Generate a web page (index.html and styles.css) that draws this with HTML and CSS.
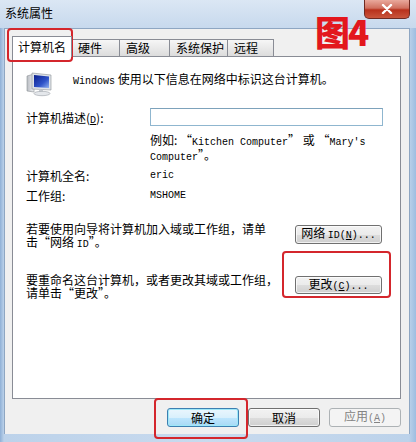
FILE: index.html
```html
<!DOCTYPE html>
<html lang="zh-CN">

<head>
    <meta charset="UTF-8">
    <title>系统属性</title>
    <link rel="stylesheet" href="styles.css">
</head>

<body>
    <div class="window">
        <div class="titlebar">
            <span class="title">系统属性</span>
            <button class="close-btn">
                <svg width="14" height="10" viewBox="0 0 14 10">
                    <path d="M3 1 L11 9 M11 1 L3 9" stroke="#fff" stroke-width="2.4" stroke-linecap="round" />
                </svg>
            </button>
        </div>

        <div class="client">
            <div class="tabs">
                <div class="tab active">计算机名</div>
                <div class="tab">硬件</div>
                <div class="tab">高级</div>
                <div class="tab">系统保护</div>
                <div class="tab">远程</div>
            </div>

            <div class="panel">
                <div class="intro">
                    <svg class="pc-icon" width="26" height="26" viewBox="0 0 26 26">
                        <defs>
                            <linearGradient id="tower" x1="0" y1="0" x2="1" y2="0">
                                <stop offset="0" stop-color="#b9bcc2" />
                                <stop offset="1" stop-color="#eef0f3" />
                            </linearGradient>
                            <linearGradient id="screen" x1="0" y1="0" x2="1" y2="1">
                                <stop offset="0" stop-color="#0b1f8c" />
                                <stop offset="0.6" stop-color="#2f53c9" />
                                <stop offset="1" stop-color="#8fb0f0" />
                            </linearGradient>
                        </defs>
                        <path d="M1 5 L8 3 L8 21 L1 20 Z" fill="url(#tower)" stroke="#8b9096" stroke-width="0.6" />
                        <path d="M6 2 L25 4 L25 19 L6 18 Z" fill="#dfe3e8" stroke="#8b9096" stroke-width="0.6" />
                        <path d="M8 4 L23 5.5 L23 17 L8 16 Z" fill="url(#screen)" />
                        <path d="M13 18.5 L17 18.7 L17 21 L13 21 Z" fill="#c8ccd2" />
                        <ellipse cx="16" cy="22.5" rx="8" ry="2.2" fill="#e4e7eb" stroke="#9ba0a6" stroke-width="0.6" />
                    </svg>
                    <p><span class="en">Windows</span> 使用以下信息在网络中标识这台计算机。</p>
                </div>

                <div class="form">
                    <label class="row-desc">计算机描述(<u class="en">D</u>):</label>
                    <input class="text-input row-desc" type="text">

                    <span></span>
                    <p class="hint">例如: “<span class="en">Kitchen Computer</span>” 或 “<span class="en">Mary's</span><br><span class="en">Computer</span>”。</p>

                    <label class="row-name">计算机全名:</label>
                    <span class="en row-name">eric</span>

                    <label class="row-group">工作组:</label>
                    <span class="en row-group">MSHOME</span>
                </div>

                <div class="action join">
                    <p>若要使用向导将计算机加入域或工作组，请单<br>击“网络 <span class="en">ID</span>”。</p>
                    <button class="btn">网络 <span class="en">ID(<u>N</u>)...</span></button>
                </div>

                <div class="action rename">
                    <p>要重命名这台计算机，或者更改其域或工作组，<br>请单击“更改”。</p>
                    <button class="btn">更改<span class="en">(<u>C</u>)...</span></button>
                </div>
            </div>

            <div class="footer">
                <button class="btn btn-default">确定</button>
                <button class="btn">取消</button>
                <button class="btn btn-disabled">应用<span class="en">(<u>A</u>)</span></button>
            </div>
        </div>

        <div class="mark">图4</div>
        <div class="highlight hl-tab"></div>
        <div class="highlight hl-change"></div>
        <div class="highlight hl-ok"></div>
    </div>
</body>

</html>
```

FILE: styles.css
```css
/* --- базовые --- */
:root {
    --client-bg: #f0f0f0;
    --border: #898c95;
    --text: #000000;
    --red: #d4262c;
    --cjk: "Noto Sans CJK SC", "Noto Sans", sans-serif;
}

body {
    margin: 0;
    font-family: var(--cjk);
    font-size: 12px;
    color: var(--text);
}

p {
    margin: 0;
}

.en {
    font-family: "Liberation Mono", monospace;
    font-size: 10px;
}

/* --- окно --- */
.window {
    position: relative;
    width: 416px;
    height: 442px;
    overflow: hidden;
    background: linear-gradient(90deg, #8fb0d6 0, #bcd2ea 4px, #c8daee 50%, #bcd2ea 409px, #9dbde0 416px);
}

.titlebar {
    height: 28px;
    display: flex;
    align-items: flex-start;
    padding-left: 5px;
    background: linear-gradient(180deg, #dbe7f4 0, #c7d9ed 100%);
}

.title {
    margin-top: 5px;
    line-height: 16px;
}

.close-btn {
    position: absolute;
    top: 0;
    left: 364px;
    width: 46px;
    height: 19px;
    padding: 0;
    border: 1px solid #6e2a22;
    border-top: none;
    border-radius: 0 0 5px 5px;
    background: linear-gradient(180deg, #e9a99c 0, #d0705f 45%, #b8311c 55%, #c9553c 100%);
    display: flex;
    align-items: center;
    justify-content: center;
}

.client {
    width: 406px;
    height: 406px;
    margin-left: 4px;
    padding: 7px 8px 0 7px;
    box-sizing: border-box;
    background: var(--client-bg);
    border: 1px solid #8ea6c2;
    border-bottom: none;
}

/* --- вкладки --- */
.tabs {
    display: flex;
    align-items: flex-end;
    height: 20px;
}

.tab {
    height: 16px;
    line-height: 16px;
    padding: 0 6px;
    border: 1px solid var(--border);
    border-bottom: none;
    border-left: none;
    background: linear-gradient(180deg, #f6f6f6 0, #e9e9e9 50%, #dcdcdc 100%);
    white-space: nowrap;
}

.tab.active {
    width: 48px;
    height: 20px;
    line-height: 20px;
    border-left: 1px solid var(--border);
    background: #fff;
    padding: 0 5px;
    margin-bottom: -1px;
    position: relative;
    z-index: 1;
}

.tabs .tab:nth-child(2) { width: 35px; }
.tabs .tab:nth-child(3) { width: 37px; }
.tabs .tab:nth-child(4) { width: 45px; }
.tabs .tab:nth-child(5) { width: 33px; }

/* --- панель --- */
.panel {
    height: 343px;
    box-sizing: border-box;
    border: 1px solid var(--border);
    background: #fff;
    padding: 14px 18px 0 13px;
}

.intro {
    display: flex;
    gap: 21px;
}

.intro p {
    margin-top: 1px;
    line-height: 14px;
}

.form {
    display: grid;
    grid-template-columns: 124px 233px;
    align-items: center;
    margin-top: 11px;
}

.text-input {
    height: 18px;
    box-sizing: border-box;
    border: 1px solid #8fb6cf;
    border-top-color: #7da2bb;
    padding: 0 3px;
    margin: 0;
}

.hint {
    margin-top: 8px;
    line-height: 12px;
    white-space: nowrap;
}

.row-name {
    margin-top: 6px;
    line-height: 12px;
}

.row-group {
    margin-top: 8px;
    line-height: 12px;
}

.action {
    display: flex;
    justify-content: space-between;
    align-items: flex-start;
}

.action p {
    line-height: 13px;
    white-space: nowrap;
}

.join {
    margin-top: 20px;
}

.join .btn {
    margin-top: 3px;
    height: 19px;
}

.rename {
    margin-top: 22px;
}

.rename .btn {
    margin-top: 3px;
}

/* --- кнопки --- */
.btn {
    width: 87px;
    height: 18px;
    padding: 0;
    font-family: var(--cjk);
    font-size: 12px;
    line-height: 14px;
    color: #000;
    border: 1px solid #707070;
    border-radius: 3px;
    background: linear-gradient(180deg, #f2f2f2 0, #ebebeb 50%, #dddddd 51%, #cfcfcf 100%);
    box-shadow: inset 0 0 0 1px rgba(255, 255, 255, 0.7);
}

.footer {
    display: flex;
    justify-content: flex-end;
    gap: 9px;
    margin-top: 9px;
}

.footer .btn {
    width: 72px;
    height: 19px;
}

.btn-default {
    border-color: #3c7fb1;
    background: linear-gradient(180deg, #eaf6fd 0, #d9f0fc 50%, #bee6fd 51%, #a7d9f5 100%);
    box-shadow: inset 0 0 0 1px #9ee8f8;
}

.btn-disabled {
    color: #838383;
    border-color: #adb2b5;
    background: #f4f4f4;
    box-shadow: none;
}

/* --- пометки поверх скриншота --- */
.mark {
    position: absolute;
    left: 315px;
    top: 11px;
    font-family: "Noto Sans CJK SC", sans-serif;
    font-weight: 900;
    font-size: 35px;
    line-height: 40px;
    color: #e3171d;
    letter-spacing: -2px;
}

.highlight {
    position: absolute;
    border: 2px solid var(--red);
    border-radius: 4px;
    box-sizing: border-box;
}

.hl-tab {
    left: 7px;
    top: 28px;
    width: 66px;
    height: 34px;
}

.hl-change {
    left: 282px;
    top: 251px;
    width: 109px;
    height: 47px;
}

.hl-ok {
    left: 154px;
    top: 398px;
    width: 94px;
    height: 41px;
}
```
